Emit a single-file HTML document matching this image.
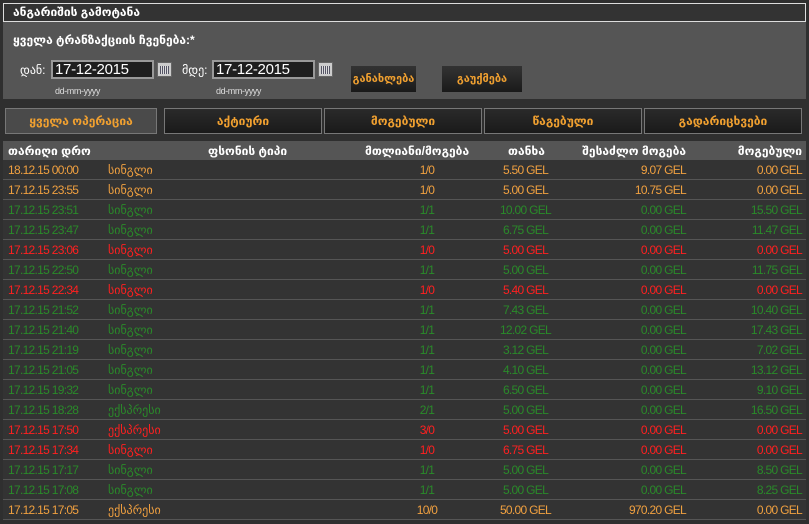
<!DOCTYPE html>
<html><head><meta charset="utf-8"><style>
*{margin:0;padding:0;box-sizing:border-box}
body{width:809px;height:524px;background:#2f2f2f;font-family:"Liberation Sans Narrow","Liberation Sans","DejaVu Sans",sans-serif;font-size:12px;position:relative;overflow:hidden;color:#fff}
.a{position:absolute}
#title{left:3px;top:3px;width:803px;height:19px;border:1px solid #ddd;background:#333;font-weight:bold;padding-left:9px;line-height:17px;font-size:12px}
#filt{left:3px;top:22px;width:803px;height:77px;background:#555}
.inp{height:19px;width:103px;border:2px solid #999;background:#1e1e1e;color:#fff;font-size:15px;line-height:15px;padding-left:2px;letter-spacing:-0.3px}
.cal{width:15px;height:15px;background:#ccc;border:1px solid #666}
.cal:after{content:"";position:absolute;left:2px;top:3px;width:9px;height:8px;background:repeating-linear-gradient(90deg,#556 0 1px,#ddd 1px 2px)}
.btn{height:26px;background:linear-gradient(#333,#1a1a1a);color:#f0a030;font-size:11px;font-weight:bold;text-align:center;line-height:26px}
.tab{top:108px;height:26px;background:linear-gradient(#2a2a2a,#1a1a1a);border:1px solid #777;color:#f0a030;font-weight:bold;text-align:center;line-height:24px;font-size:12px}
.hdr{left:3px;top:141px;width:803px;height:19px;background:#555}
.r{left:3px;width:803px;height:20px;background:#333;border-bottom:1px solid #555;letter-spacing:-0.7px}
.c{position:absolute;top:3px;white-space:nowrap}
.o{color:#f0a040}.g{color:#2a8a2a}.d{color:#ff2020}
</style></head><body>
<div class="a" id="title">ანგარიშის გამოტანა</div>
<div class="a" id="filt"></div>
<div class="a" style="left:13px;top:33px;font-weight:bold">ყველა ტრანზაქციის ჩვენება:*</div>
<div class="a" style="left:20px;top:63px">დან:</div>
<div class="a inp" style="left:51px;top:60px">17-12-2015</div>
<div class="a cal" style="left:157px;top:62px"></div>
<div class="a" style="left:55px;top:86px;font-size:9px;color:#ddd;letter-spacing:-0.4px">dd-mm-yyyy</div>
<div class="a" style="left:182px;top:63px">მდე:</div>
<div class="a inp" style="left:212px;top:60px">17-12-2015</div>
<div class="a cal" style="left:318px;top:62px"></div>
<div class="a" style="left:216px;top:86px;font-size:9px;color:#ddd;letter-spacing:-0.4px">dd-mm-yyyy</div>
<div class="a btn" style="left:351px;top:66px;width:65px">განახლება</div>
<div class="a btn" style="left:442px;top:66px;width:80px">გაუქმება</div>
<div class="a tab" style="left:5px;width:152px;background:#4a4a4a">ყველა ოპერაცია</div>
<div class="a tab" style="left:164px;width:158px">აქტიური</div>
<div class="a tab" style="left:324px;width:158px">მოგებული</div>
<div class="a tab" style="left:484px;width:158px">წაგებული</div>
<div class="a tab" style="left:644px;width:158px">გადარიცხვები</div>
<div class="a hdr">
<span class="c" style="left:5px;font-weight:bold">თარიღი დრო</span>
<span class="c" style="left:205px;font-weight:bold">ფსონის ტიპი</span>
<span class="c" style="left:362px;font-weight:bold">მთლიანი/მოგება</span>
<span class="c" style="left:505px;font-weight:bold">თანხა</span>
<span class="c" style="right:120px;font-weight:bold">შესაძლო მოგება</span>
<span class="c" style="right:4px;font-weight:bold">მოგებული</span>
</div>
<div id="rows"></div>
<script>
var d=[["o","18.12.15 00:00","სინგლი","1/0","5.50","9.07","0.00"],
["o","17.12.15 23:55","სინგლი","1/0","5.00","10.75","0.00"],
["g","17.12.15 23:51","სინგლი","1/1","10.00","0.00","15.50"],
["g","17.12.15 23:47","სინგლი","1/1","6.75","0.00","11.47"],
["d","17.12.15 23:06","სინგლი","1/0","5.00","0.00","0.00"],
["g","17.12.15 22:50","სინგლი","1/1","5.00","0.00","11.75"],
["d","17.12.15 22:34","სინგლი","1/0","5.40","0.00","0.00"],
["g","17.12.15 21:52","სინგლი","1/1","7.43","0.00","10.40"],
["g","17.12.15 21:40","სინგლი","1/1","12.02","0.00","17.43"],
["g","17.12.15 21:19","სინგლი","1/1","3.12","0.00","7.02"],
["g","17.12.15 21:05","სინგლი","1/1","4.10","0.00","13.12"],
["g","17.12.15 19:32","სინგლი","1/1","6.50","0.00","9.10"],
["g","17.12.15 18:28","ექსპრესი","2/1","5.00","0.00","16.50"],
["d","17.12.15 17:50","ექსპრესი","3/0","5.00","0.00","0.00"],
["d","17.12.15 17:34","სინგლი","1/0","6.75","0.00","0.00"],
["g","17.12.15 17:17","სინგლი","1/1","5.00","0.00","8.50"],
["g","17.12.15 17:08","სინგლი","1/1","5.00","0.00","8.25"],
["o","17.12.15 17:05","ექსპრესი","10/0","50.00","970.20","0.00"]];
var h="";d.forEach(function(r,i){h+='<div class="a r '+r[0]+'" style="top:'+(160+i*20)+'px"><span class="c" style="left:5px">'+r[1]+'</span><span class="c" style="left:105px;letter-spacing:0">'+r[2]+'</span><span class="c" style="left:404px;width:40px;text-align:center">'+r[3]+'</span><span class="c" style="left:480px;width:85px;text-align:center">'+r[4]+' GEL</span><span class="c" style="right:120px">'+r[5]+' GEL</span><span class="c" style="right:4px">'+r[6]+' GEL</span></div>'});
document.getElementById("rows").innerHTML=h;
</script>
</body></html>
